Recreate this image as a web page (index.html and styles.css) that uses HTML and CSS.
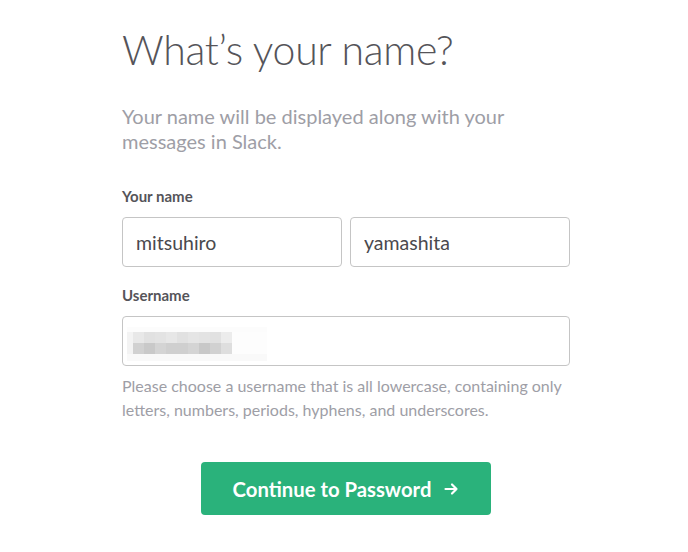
FILE: index.html
```html
<!DOCTYPE html>
<html lang="en">
<head>
    <meta charset="UTF-8">
    <meta name="viewport" content="width=device-width, initial-scale=1.0">
    <title>What's your name? | Slack</title>
    <link rel="stylesheet" href="styles.css">
</head>
<body>
    <div class="container">
        <h1>What’s your name?</h1>
        <p class="lead">Your name will be displayed along with your messages in Slack.</p>

        <form id="nameForm">
            <label class="field-label">Your name</label>
            <div class="name-row">
                <input type="text" class="text-input" value="mitsuhiro">
                <input type="text" class="text-input" value="yamashita">
            </div>

            <label class="field-label">Username</label>
            <div class="text-input username">
                <!-- valor ocultado (mosaico) -->
                <svg class="mosaic" width="140" height="34" viewBox="0 0 140 34">
                    <rect x="0" y="0" width="140" height="34" fill="#fcfcfc"/>
                    <rect x="0" y="5" width="6" height="22" fill="#f3f3f3"/>
                    <rect x="6" y="5" width="11" height="11" fill="#e8e8e8"/>
                    <rect x="17" y="5" width="11" height="11" fill="#e1e1e1"/>
                    <rect x="28" y="5" width="11" height="11" fill="#e3e3e3"/>
                    <rect x="39" y="5" width="11" height="11" fill="#e7e7e7"/>
                    <rect x="50" y="5" width="11" height="11" fill="#e1e1e1"/>
                    <rect x="61" y="5" width="11" height="11" fill="#e5e5e5"/>
                    <rect x="72" y="5" width="11" height="11" fill="#e3e3e3"/>
                    <rect x="83" y="5" width="11" height="11" fill="#e1e1e1"/>
                    <rect x="94" y="5" width="11" height="11" fill="#ececec"/>
                    <rect x="6" y="16" width="11" height="11" fill="#d1d1d1"/>
                    <rect x="17" y="16" width="11" height="11" fill="#c9c9c9"/>
                    <rect x="28" y="16" width="11" height="11" fill="#d4d4d4"/>
                    <rect x="39" y="16" width="11" height="11" fill="#cfcfcf"/>
                    <rect x="50" y="16" width="11" height="11" fill="#cfcfcf"/>
                    <rect x="61" y="16" width="11" height="11" fill="#d4d4d4"/>
                    <rect x="72" y="16" width="11" height="11" fill="#c8c8c8"/>
                    <rect x="83" y="16" width="11" height="11" fill="#d1d1d1"/>
                    <rect x="94" y="16" width="11" height="11" fill="#dedede"/>
                    <rect x="0" y="27" width="140" height="7" fill="#f9f9f9"/>
                    <rect x="105" y="5" width="35" height="22" fill="#fdfdfd"/>
                </svg>
            </div>
            <p class="hint">Please choose a username that is all lowercase, containing only letters, numbers, periods, hyphens, and underscores.</p>

            <div class="actions">
                <button type="button" class="btn-primary">
                    Continue to Password
                    <svg class="arrow" width="15" height="14" viewBox="0 0 15 14">
                        <path d="M1.5 7h11M8 2.5l4.5 4.5L8 11.5" fill="none" stroke="#fff" stroke-width="2.2" stroke-linecap="round" stroke-linejoin="round"/>
                    </svg>
                </button>
            </div>
        </form>
    </div>
</body>
</html>
```

FILE: styles.css
```css
body {
    font-family: Lato, "Open Sans", sans-serif;
    background-color: #fff;
    margin: 0;
    padding: 0 0 0 4px;
    color: #3d3c40;
}
.container {
    width: 448px;
    margin: 0 auto;
    padding-top: 24px;
}
h1 {
    font-size: 41px;
    font-weight: 300;
    color: #555459;
    margin: 0 0 28px;
    line-height: 52px;
    letter-spacing: -0.3px;
}
.lead {
    font-size: 20px;
    line-height: 25px;
    color: #9e9ea6;
    margin: 0 0 32px;
}
.field-label {
    display: block;
    font-size: 15px;
    font-weight: 700;
    color: #555459;
    line-height: 20px;
    margin-bottom: 11px;
}
.name-row {
    display: flex;
    gap: 8px;
    margin-bottom: 18px;
}
.text-input {
    box-sizing: border-box;
    width: 100%;
    height: 50px;
    padding: 0 13px;
    border: 1px solid #c5c5c5;
    border-radius: 4px;
    font-family: inherit;
    font-size: 19.5px;
    color: #4a494e;
    background: #fff;
}
.username {
    display: flex;
    align-items: center;
    padding-left: 4px;
}
.mosaic {
    display: block;
    margin-top: 5px;
}
.hint {
    font-size: 16px;
    line-height: 24px;
    color: #9e9ea6;
    margin: 8px 0 0;
}
.actions {
    display: flex;
    justify-content: center;
    margin-top: 40px;
}
.btn-primary {
    width: 290px;
    height: 53px;
    background-color: #2ab27b;
    color: #fff;
    border: none;
    border-radius: 4px;
    font-family: inherit;
    font-size: 20.3px;
    font-weight: 700;
    display: flex;
    align-items: center;
    justify-content: center;
    gap: 13px;
    cursor: pointer;
}
.arrow {
    display: block;
}
```
